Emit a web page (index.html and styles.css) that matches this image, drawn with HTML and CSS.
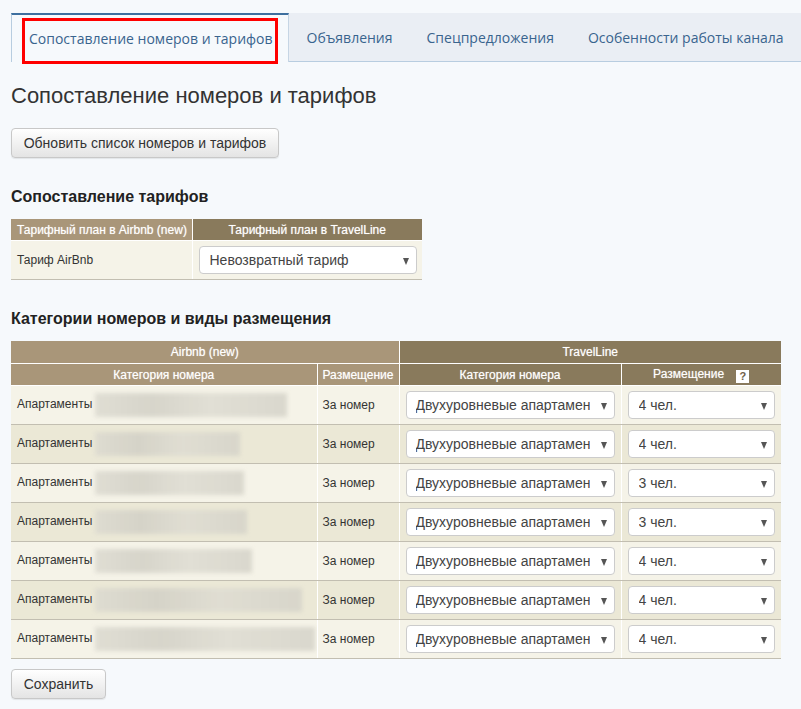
FILE: index.html
```html
<!DOCTYPE html>
<html lang="ru">
<head>
<meta charset="utf-8">
<link rel="stylesheet" href="styles.css">
</head>
<body>
<div class="page">
  <nav class="tabs">
    <a class="tab active">Сопоставление номеров и тарифов<span class="mark"></span></a>
    <a class="tab">Объявления</a>
    <a class="tab">Спецпредложения</a>
    <a class="tab">Особенности работы канала</a>
  </nav>

  <main class="content">
    <h1 class="title">Сопоставление номеров и тарифов</h1>
    <button class="btn btn-refresh">Обновить список номеров и тарифов</button>

    <h2 class="section">Сопоставление тарифов</h2>
    <table class="grid rates">
      <colgroup><col class="rc1"><col class="rc2"></colgroup>
      <thead>
        <tr>
          <th class="light c1">Тарифный план в Airbnb (new)</th>
          <th class="dark">Тарифный план в TravelLine</th>
        </tr>
      </thead>
      <tbody>
        <tr class="odd">
          <td class="txt">Тариф AirBnb</td>
          <td class="sel"><div class="select"><span>Невозвратный тариф</span></div></td>
        </tr>
      </tbody>
    </table>

    <h2 class="section section2">Категории номеров и виды размещения</h2>
    <table class="grid rooms">
      <colgroup><col class="w1"><col class="w2"><col class="w3"><col class="w4"></colgroup>
      <thead>
        <tr class="h1">
          <th class="light" colspan="2">Airbnb (new)</th>
          <th class="dark" colspan="2">TravelLine</th>
        </tr>
        <tr class="h2">
          <th class="light">Категория номера</th>
          <th class="light pl">Размещение</th>
          <th class="dark">Категория номера</th>
          <th class="dark">Размещение <span class="help">?</span></th>
        </tr>
      </thead>
      <tbody>
        <tr class="odd">
          <td class="txt">Апартаменты <span class="blur" style="width:192px"></span></td>
          <td class="txt">За номер</td>
          <td class="sel"><div class="select cat"><span>Двухуровневые апартаменты</span></div></td>
          <td class="sel"><div class="select"><span>4 чел.</span></div></td>
        </tr>
        <tr class="even">
          <td class="txt">Апартаменты <span class="blur" style="width:145px"></span></td>
          <td class="txt">За номер</td>
          <td class="sel"><div class="select cat"><span>Двухуровневые апартаменты</span></div></td>
          <td class="sel"><div class="select"><span>4 чел.</span></div></td>
        </tr>
        <tr class="odd">
          <td class="txt">Апартаменты <span class="blur" style="width:149px"></span></td>
          <td class="txt">За номер</td>
          <td class="sel"><div class="select cat"><span>Двухуровневые апартаменты</span></div></td>
          <td class="sel"><div class="select"><span>3 чел.</span></div></td>
        </tr>
        <tr class="even">
          <td class="txt">Апартаменты <span class="blur" style="width:152px"></span></td>
          <td class="txt">За номер</td>
          <td class="sel"><div class="select cat"><span>Двухуровневые апартаменты</span></div></td>
          <td class="sel"><div class="select"><span>3 чел.</span></div></td>
        </tr>
        <tr class="odd">
          <td class="txt">Апартаменты <span class="blur" style="width:157px"></span></td>
          <td class="txt">За номер</td>
          <td class="sel"><div class="select cat"><span>Двухуровневые апартаменты</span></div></td>
          <td class="sel"><div class="select"><span>4 чел.</span></div></td>
        </tr>
        <tr class="even">
          <td class="txt">Апартаменты <span class="blur" style="width:207px"></span></td>
          <td class="txt">За номер</td>
          <td class="sel"><div class="select cat"><span>Двухуровневые апартаменты</span></div></td>
          <td class="sel"><div class="select"><span>4 чел.</span></div></td>
        </tr>
        <tr class="odd">
          <td class="txt">Апартаменты <span class="blur" style="width:220px"></span></td>
          <td class="txt">За номер</td>
          <td class="sel"><div class="select cat"><span>Двухуровневые апартаменты</span></div></td>
          <td class="sel"><div class="select"><span>4 чел.</span></div></td>
        </tr>
      </tbody>
    </table>

    <button class="btn btn-save">Сохранить</button>
  </main>
</div>
</body>
</html>
```

FILE: styles.css
```css
html, body {
  margin: 0;
  padding: 0;
  background: #f6f9fc;
}
body {
  font-family: "Liberation Sans", Arial, sans-serif;
  color: #333;
  width: 801px;
  height: 709px;
  overflow: hidden;
}
.page {
  padding: 13px 0 0 11px;
}

/* Tabs */
.tabs {
  display: flex;
  height: 47px;
  background: #eaeef4;
  border-bottom: 1px solid #b8cde0;
  border-top: 1px solid transparent;
}
.tab {
  display: flex;
  align-items: center;
  padding: 0 17px 0 17px;
  font-family: "Open Sans", "Noto Sans", sans-serif;
  font-size: 14px;
  color: #39648e;
  white-space: nowrap;
  position: relative;
  box-sizing: border-box;
}
.tab.active {
  background: #f6f9fc;
  border-top: 2px solid #3e6f9f;
  border-left: 1px solid #b8cde0;
  border-right: 1px solid #c6d5e4;
  margin-top: -1px;
  margin-bottom: -1px;
  padding: 0 15px 0 17px;
  height: 49px;
}
.tab.active + .tab {
  padding-left: 18px;
}
.mark {
  position: absolute;
  left: 10px;
  top: 3px;
  width: 250px;
  height: 40px;
  border: 3px solid #ff0000;
}

/* Content */
.content {
  padding-top: 21px;
}
.title {
  font-weight: normal;
  font-size: 22px;
  margin: 0 0 19px;
  line-height: 26px;
  color: #333;
}
.btn {
  display: block;
  font-family: "Liberation Sans", Arial, sans-serif;
  font-size: 14px;
  color: #333;
  background: linear-gradient(#ffffff, #e4e4e4);
  border: 1px solid #c8c8c8;
  border-radius: 4px;
  height: 30px;
  padding: 0 8px;
  white-space: nowrap;
  box-shadow: 0 1px 1px rgba(0,0,0,0.08);
}
.btn-refresh {
  width: 268px;
}
.btn-save {
  width: 95px;
  margin-top: 10px;
}
.section {
  font-size: 16px;
  font-weight: bold;
  margin: 29px 0 12px;
  line-height: 20px;
  color: #222;
}
.section2 {
  margin-top: 29px;
  margin-bottom: 12px;
}

/* Tables */
.grid {
  border-collapse: collapse;
  table-layout: fixed;
  font-size: 12px;
}
.grid th {
  color: #fff;
  font-weight: normal;
  height: 21px;
  padding: 0 4px;
  white-space: nowrap;
  overflow: hidden;
  text-shadow: 0 0 1px rgba(255,255,255,0.6);
  border-left: 1px solid #fff;
  border-right: 1px solid #fff;
  border-bottom: 1px solid #fff;
}
.grid th:first-child { border-left: none; }
.grid th:last-child { border-right: none; }
.grid .light { background: #a99679; }
.grid .dark { background: #897a5c; }
.grid td {
  border-bottom: 1px solid #c2beb1;
  border-left: 1px solid #fff;
  padding: 0;
  height: 39px;
  box-sizing: border-box;
  white-space: nowrap;
  overflow: hidden;
}
.grid td:first-child { border-left: none; }
.grid .odd td { background: #f5f3e8; }
.grid .even td { background: #ebe8d6; }
.grid td.txt {
  padding: 0 6px;
  color: #333;
}
.grid td.sel {
  padding: 0 6px;
}

.rates { width: 411px; }
.rates .rc1 { width: 181px; }
.rates .rc2 { width: 230px; }
.rates th.c1 { text-align: left; padding-left: 6px; }
.rates td.sel { padding: 0 5px 0 6px; }

.rooms { width: 770px; }
.rooms .w1 { width: 306px; }
.rooms .w2 { width: 82px; }
.rooms .w3 { width: 222px; }
.rooms .w4 { width: 160px; }
.rooms .h1 th { height: 22px; }
.rooms .h2 th { height: 21px; }
.rooms th.pl { padding: 0 2px; }
.rooms td:nth-child(2) { padding: 0 5px; }

.help {
  display: inline-block;
  width: 13px;
  height: 13px;
  line-height: 13px;
  background: #fff;
  color: #6f624a;
  font-weight: bold;
  font-size: 11px;
  text-align: center;
  margin-left: 9px;
  vertical-align: -2px;
  text-shadow: none;
}

.blur {
  display: inline-block;
  height: 24px;
  vertical-align: middle;
  margin-left: -1px;
  background: linear-gradient(90deg, #dcdad0, #d2d0c6 30%, #dedcd2 60%, #d5d3c9);
  filter: blur(2px);
  opacity: 0.85;
}

/* custom select */
.select {
  position: relative;
  width: 100%;
  height: 28px;
  background: #fff;
  border: 1px solid #cccccc;
  border-radius: 4px;
  box-sizing: border-box;
  font-size: 14px;
  color: #444;
  display: flex;
  align-items: center;
  padding: 0 26px 0 10px;
  overflow: hidden;
  white-space: nowrap;
}
.select.cat { padding: 0 24px 0 9px; }
.select span {
  overflow: hidden;
  display: block;
}
.select::after {
  content: "";
  position: absolute;
  right: 7px;
  top: 11px;
  border-left: 3.5px solid transparent;
  border-right: 3.5px solid transparent;
  border-top: 7px solid #555;
}
```
